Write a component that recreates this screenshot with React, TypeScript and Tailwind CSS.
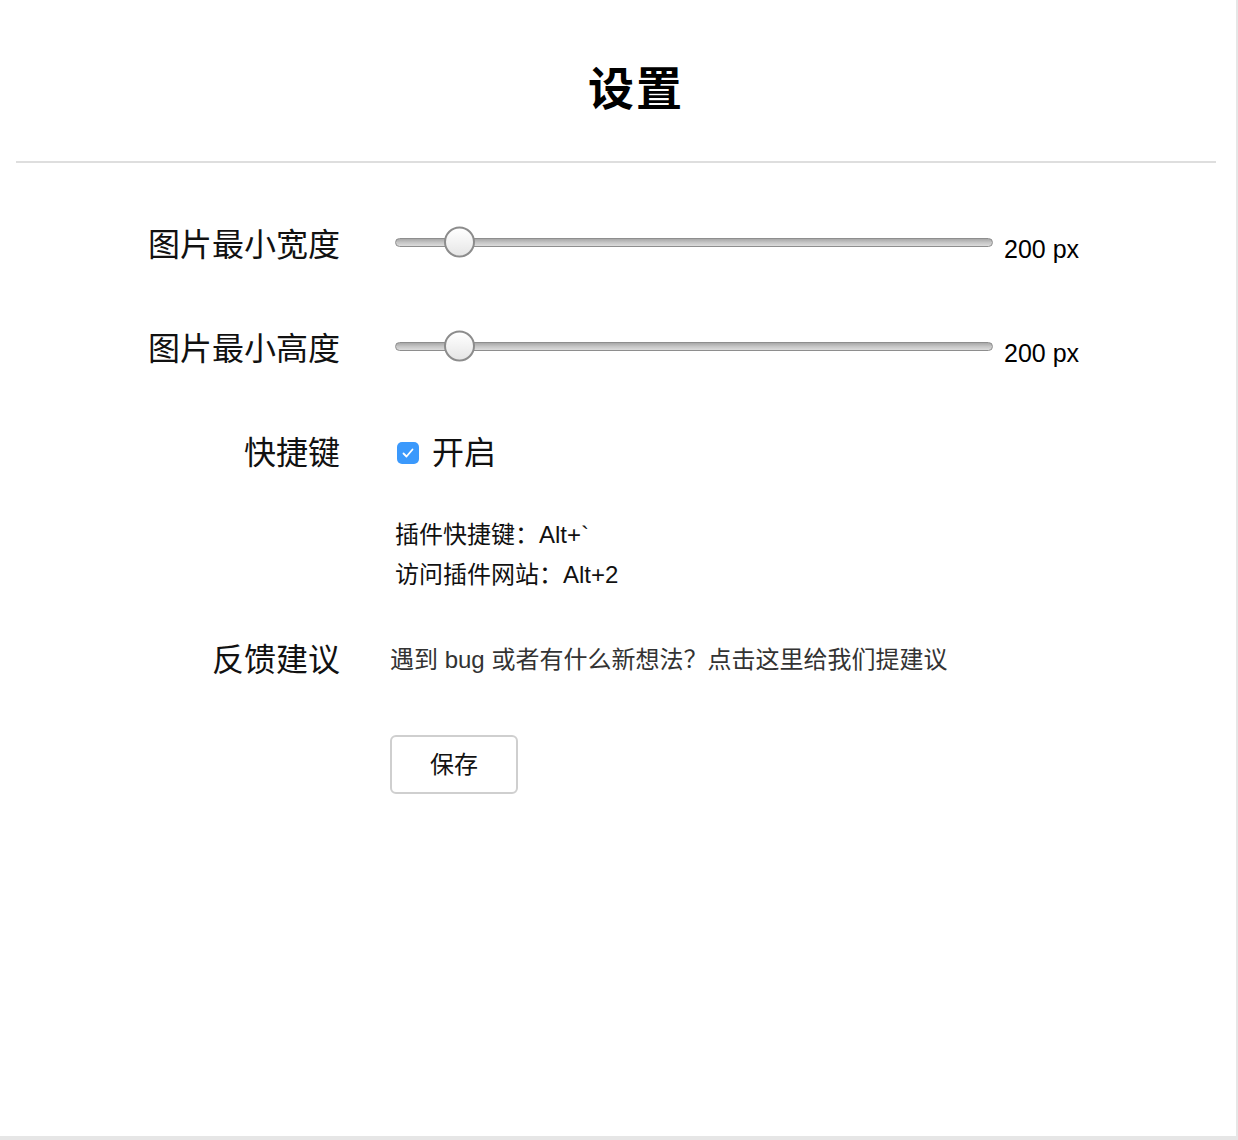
const font = "font-['Liberation_Sans','Noto_Sans_CJK_SC',sans-serif]";

function Slider({ value }: { value: number }) {
  return (
    <div className="flex items-center ml-[5px]">
      <div className="relative mb-[6px] w-[598px] h-[9px] rounded-full border border-[#8e8e8e] bg-gradient-to-b from-[#a8a8a8] via-[#c6c6c6] to-[#dcdcdc]">
        <div className="absolute left-[48px] top-1/2 -translate-y-1/2 w-[31px] h-[31px] rounded-full border-2 border-[#8c8c8c] bg-gradient-to-b from-white to-[#e6e6e6]" />
      </div>
      <span className="ml-[11px] mt-[10px] text-[25px] text-black">{value} px</span>
    </div>
  );
}

function Row({ label, children, className = "" }: { label: string; children?: React.ReactNode; className?: string }) {
  return (
    <div className={`flex items-center ${className}`}>
      <div className="w-[340px] text-right text-[32px] text-[#111]">{label}</div>
      <div className="ml-[50px] flex-1">{children}</div>
    </div>
  );
}

export default function App() {
  return (
    <div className={`w-[1238px] h-[1140px] bg-[#e6e6e6] ${font}`}>
      <div className="w-[1236px] h-[1136px] bg-white">
        <header className="h-[161px] flex items-center justify-center pt-[18px] pl-[36px]">
          <h1 className="text-[46px] font-bold text-black tracking-[2px]">设置</h1>
        </header>
        <div className="ml-4 mr-5 h-[2px] bg-[#dedede]" />

        <Row label="图片最小宽度" className="h-[104px] mt-[30px]">
          <Slider value={200} />
        </Row>
        <Row label="图片最小高度" className="h-[104px]">
          <Slider value={200} />
        </Row>
        <Row label="快捷键" className="h-[104px]">
          <div className="flex items-center ml-[7px]">
            <span className="w-[22px] h-[22px] rounded-[5px] bg-[#3b99fc] flex items-center justify-center">
              <svg width="14" height="14" viewBox="0 0 14 14" fill="none">
                <path d="M2.5 7.5 L5.5 10.5 L11.5 3.5" stroke="white" strokeWidth="1.8" strokeLinecap="round" strokeLinejoin="round" />
              </svg>
            </span>
            <span className="ml-[13px] text-[32px] text-[#111]">开启</span>
          </div>
        </Row>
        <div className="ml-[395px] mt-[10px] text-[24px] text-[#111] leading-[40px]">
          <div>插件快捷键：Alt+`</div>
          <div>访问插件网站：Alt+2</div>
        </div>

        <Row label="反馈建议" className="h-[60px] mt-[35px]">
          <span className="text-[24px] text-[#333] cursor-pointer">遇到 bug 或者有什么新想法？点击这里给我们提建议</span>
        </Row>

        <div className="ml-[390px] mt-[45px]">
          <button className="w-[128px] h-[59px] rounded-[6px] border-2 border-[#cfcfcf] bg-white text-[24px] text-[#111]">
            保存
          </button>
        </div>
      </div>
    </div>
  );
}
